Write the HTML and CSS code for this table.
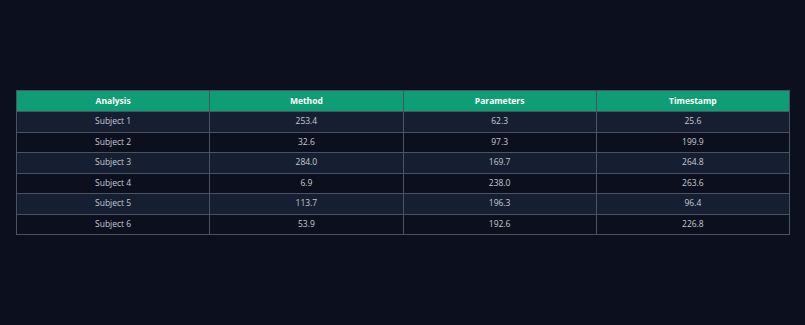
FILE: index.html
```html
<!DOCTYPE html>
<html>
<head>
<meta charset="utf-8">
<link rel="stylesheet" href="styles.css">
</head>
<body>
<div class="wrap">
<table class="data">
<thead>
<tr><th>Analysis</th><th>Method</th><th>Parameters</th><th>Timestamp</th></tr>
</thead>
<tbody>
<tr><td>Subject 1</td><td>253.4</td><td>62.3</td><td>25.6</td></tr>
<tr><td>Subject 2</td><td>32.6</td><td>97.3</td><td>199.9</td></tr>
<tr><td>Subject 3</td><td>284.0</td><td>169.7</td><td>264.8</td></tr>
<tr><td>Subject 4</td><td>6.9</td><td>238.0</td><td>263.6</td></tr>
<tr><td>Subject 5</td><td>113.7</td><td>196.3</td><td>96.4</td></tr>
<tr><td>Subject 6</td><td>53.9</td><td>192.6</td><td>226.8</td></tr>
</tbody>
</table>
</div>
</body>
</html>
```
FILE: styles.css
```css
html, body {
  margin: 0;
  background: #0c101e;
}
.wrap {
  padding: 90px 15px 0 16px;
}
.data {
  width: 774px;
  border-collapse: collapse;
  table-layout: fixed;
  font-family: "Open Sans", "Noto Sans", sans-serif;
  font-size: 8.5px;
  line-height: 10px;
}
.data th, .data td {
  border: 1px solid #4a5263;
  text-align: center;
  padding: 0 0 1px;
}
.data th {
  background: #0f9d76;
  color: #ffffff;
  font-weight: 700;
  height: 19px;
}
.data td {
  color: #c5cad3;
  height: 18.5px;
}
.data tbody tr:nth-child(odd) td {
  background: #161f31;
}
.data tbody tr:nth-child(even) td {
  background: #0c101e;
}
```
